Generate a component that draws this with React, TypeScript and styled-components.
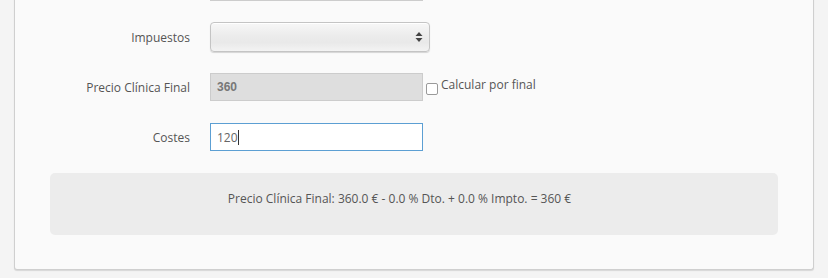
import React from "react";
import styled, { createGlobalStyle } from "styled-components";

const Global = createGlobalStyle`
  html, body { margin: 0; padding: 0; background: #f4f4f4; overflow: hidden; }
  body { font-family: "Open Sans", "Liberation Sans", sans-serif; }
`;

const Page = styled.div`
  width: 828px;
  height: 278px;
  overflow: hidden;
  padding: 0 14px 0 14px;
  box-sizing: border-box;
`;

const Panel = styled.div`
  margin-top: -60px;
  width: 800px;
  box-sizing: border-box;
  background: #fafafa;
  border: 1px solid #cfcfcf;
  border-top: none;
  border-radius: 0 0 3px 3px;
  box-shadow: 0 1px 1px rgba(0, 0, 0, 0.12);
  padding: 32px 35px 34px 35px;
  display: flex;
  flex-direction: column;
  gap: 20px;
`;

const Row = styled.div`
  display: flex;
  align-items: center;
  height: 30px;
  gap: 20px;
`;

const Label = styled.label`
  width: 140px;
  text-align: right;
  font-size: 12px;
  color: #555;
`;

const TextInput = styled.div<{ $focus?: boolean; $disabled?: boolean }>`
  width: 213px;
  height: 28px;
  box-sizing: border-box;
  display: flex;
  align-items: center;
  padding: 0 6px;
  font-size: 12px;
  color: #666;
  background: ${(p) => (p.$disabled ? "#dedede" : "#fff")};
  border: 1px solid ${(p) => (p.$focus ? "#5c9fd3" : "#cccccc")};
`;

const BoldValue = styled.span`
  font-family: "Liberation Sans", Arial, sans-serif;
  font-weight: bold;
  font-size: 12px;
  color: #777;
`;

const Caret = styled.span`
  display: inline-block;
  width: 1px;
  height: 15px;
  background: #333;
  margin-left: 0;
`;

const Select = styled.div`
  width: 220px;
  height: 30px;
  box-sizing: border-box;
  border: 1px solid #c4c4c4;
  border-radius: 4px;
  background: linear-gradient(to bottom, #f7f7f7 0%, #ececec 45%, #e9e9e9 70%, #f3f3f3 100%);
  box-shadow: 0 1px 1px rgba(0, 0, 0, 0.15), inset 0 1px 0 #fff;
  display: flex;
  align-items: center;
  justify-content: flex-end;
  padding-right: 6px;
`;

const CheckWrap = styled.div`
  display: flex;
  align-items: center;
  gap: 3px;
  margin-left: -17px;
  font-size: 12px;
  color: #555;
`;

const Box = styled.span`
  display: inline-block;
  width: 10px;
  height: 10px;
  border: 1px solid #9a9a9a;
  border-radius: 2px;
  background: #fff;
  margin-top: 3px;
`;

const CheckText = styled.span`
  margin-top: -5px;
`;

const Summary = styled.div`
  height: 62px;
  background: #ececec;
  border-radius: 5px;
  display: flex;
  justify-content: center;
  padding: 17px 29px 0 0;
  box-sizing: border-box;
  font-size: 12px;
  color: #555;
  margin-top: 1px;
`;

export default function App() {
  return (
    <>
      <Global />
      <Page>
        <Panel>
          <Row>
            <Label />
            <TextInput />
          </Row>
          <Row>
            <Label>Impuestos</Label>
            <Select>
              <svg width="8" height="12" viewBox="0 0 8 12">
                <path d="M4 1 L7.5 5 H0.5 Z" fill="#444" />
                <path d="M4 11 L7.5 7 H0.5 Z" fill="#444" />
              </svg>
            </Select>
          </Row>
          <Row>
            <Label>Precio Clínica Final</Label>
            <TextInput $disabled>
              <BoldValue>360</BoldValue>
            </TextInput>
            <CheckWrap>
              <Box />
              <CheckText>Calcular por final</CheckText>
            </CheckWrap>
          </Row>
          <Row>
            <Label>Costes</Label>
            <TextInput $focus>
              120<Caret />
            </TextInput>
          </Row>
          <Summary>Precio Clínica Final: 360.0 € - 0.0 % Dto. + 0.0 % Impto. = 360 €</Summary>
        </Panel>
      </Page>
    </>
  );
}
